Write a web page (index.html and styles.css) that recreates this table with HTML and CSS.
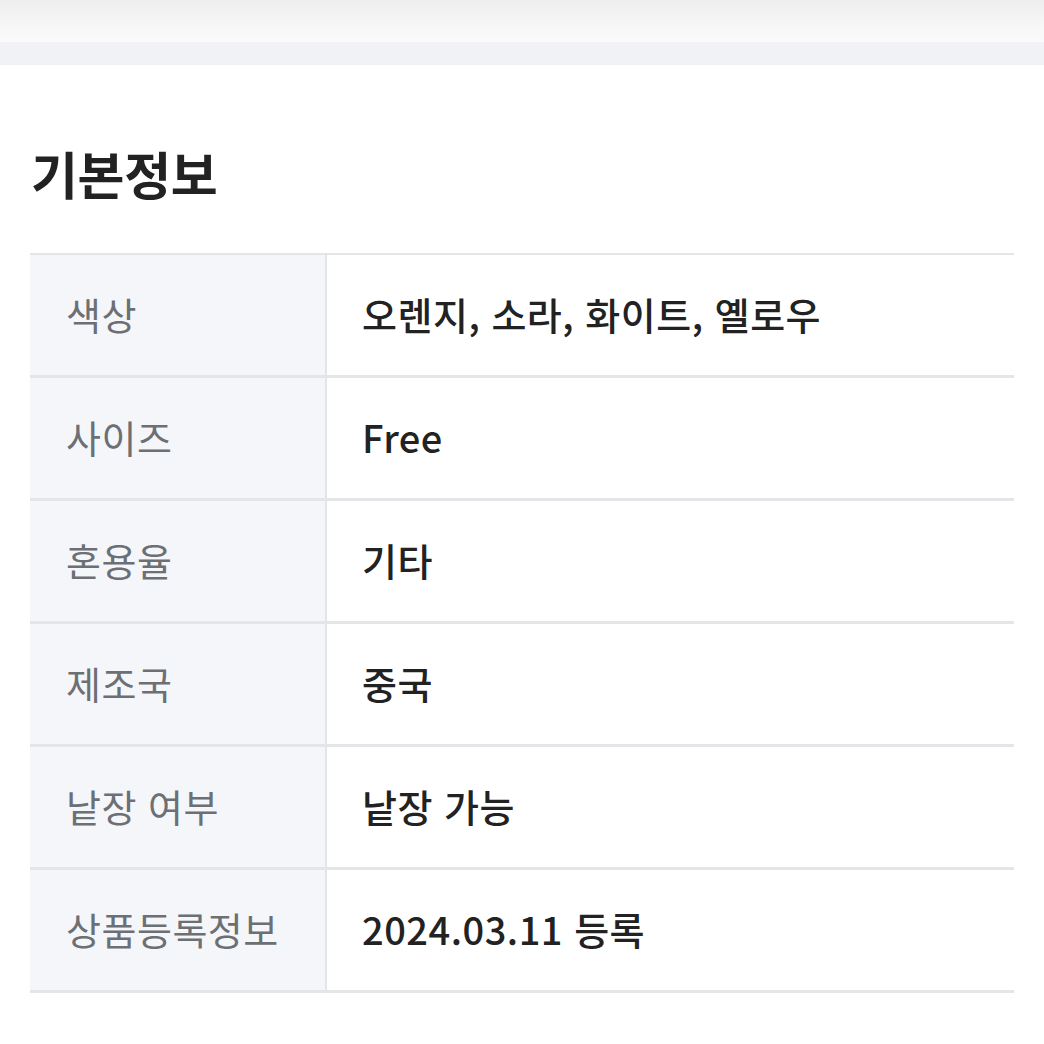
FILE: index.html
```html
<!DOCTYPE html>
<html lang="ko">
<head>
<meta charset="utf-8">
<link rel="stylesheet" href="styles.css">
</head>
<body>
<div class="topbar"><div class="topbar-upper"></div><div class="topbar-lower"></div></div>
<section class="info">
  <h2 class="title">기본정보</h2>
  <div class="table">
    <div class="row"><div class="label">색상</div><div class="value">오렌지, 소라, 화이트, 옐로우</div></div>
    <div class="row"><div class="label">사이즈</div><div class="value">Free</div></div>
    <div class="row"><div class="label">혼용율</div><div class="value">기타</div></div>
    <div class="row"><div class="label">제조국</div><div class="value">중국</div></div>
    <div class="row"><div class="label">낱장 여부</div><div class="value">낱장 가능</div></div>
    <div class="row"><div class="label">상품등록정보</div><div class="value">2024.03.11 등록</div></div>
  </div>
</section>
</body>
</html>
```

FILE: styles.css
```css
html, body {
  margin: 0;
  padding: 0;
  background: #ffffff;
  font-family: "Noto Sans CJK KR", "Noto Sans", sans-serif;
}
.topbar {
  display: flex;
  flex-direction: column;
}
.topbar-upper {
  height: 42px;
  background: linear-gradient(#eeeeef, #f8f8f9 70%, #fafafc);
}
.topbar-lower {
  height: 23px;
  background: #f1f2f6;
}
.info {
  padding: 0 30px 0 30px;
}
.title {
  margin: 0;
  padding: 78px 0 0 1px;
  height: 108px;
  box-sizing: border-box;
  font-size: 51px;
  font-weight: 700;
  line-height: 60px;
  color: #222222;
  letter-spacing: -0.3px;
}
.table {
  margin-top: 80px;
  border-top: 2px solid #e3e5e8;
}
.row {
  display: flex;
  height: 123px;
  border-bottom: 3px solid #e3e5e8;
  box-sizing: border-box;
}
.label {
  width: 297px;
  flex: none;
  background: #f4f6fa;
  border-right: 2px solid #e3e5e8;
  box-sizing: border-box;
  padding-left: 36px;
  padding-bottom: 3px;
  display: flex;
  align-items: center;
  font-size: 38px;
  letter-spacing: 0.5px;
  color: #6c6f74;
  font-weight: 400;
}
.value {
  flex: 1;
  padding-left: 35px;
  padding-bottom: 3px;
  display: flex;
  align-items: center;
  font-size: 38px;
  letter-spacing: 0.5px;
  color: #222222;
  font-weight: 500;
}
```
